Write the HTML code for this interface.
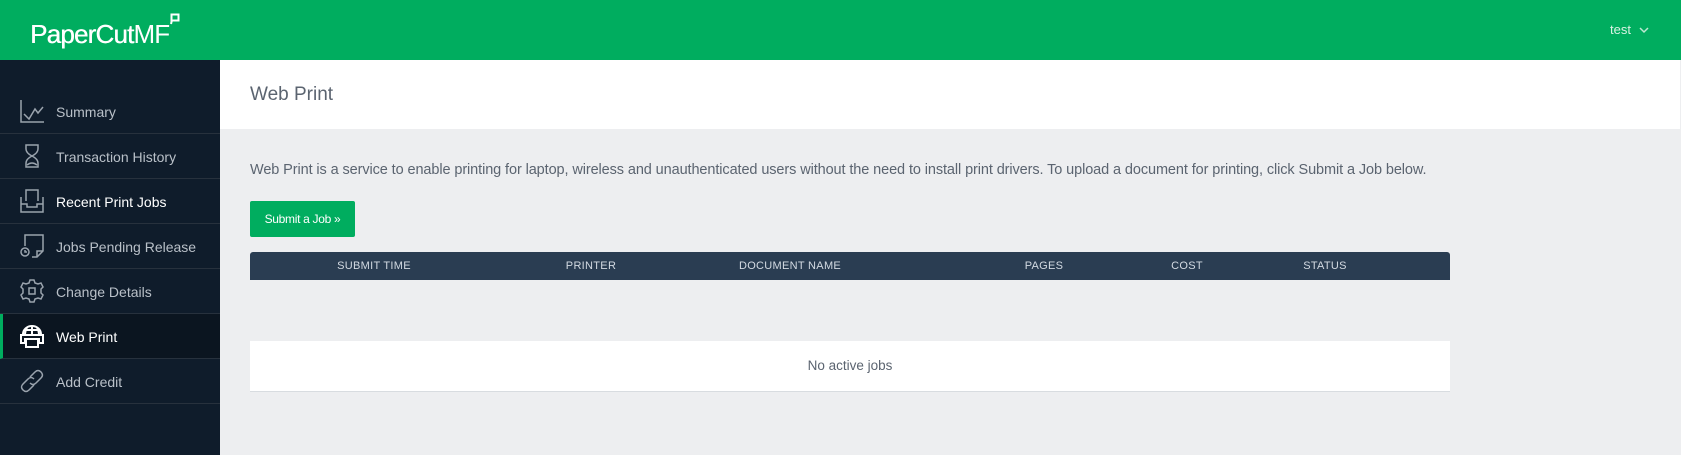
<!DOCTYPE html>
<html><head><meta charset="utf-8"><style>
*{margin:0;padding:0;box-sizing:border-box}
body{width:1681px;height:455px;overflow:hidden;background:#edeef0;font-family:"Liberation Sans",sans-serif;position:relative}
.top{position:absolute;left:0;top:0;width:1681px;height:60px;background:#00ad5f}
.logo{position:absolute;left:30px;top:19px;color:#fff;font-size:26px;letter-spacing:-0.8px}
.logo b{font-weight:normal;text-shadow:0.4px 0 0 #fff}
.user{position:absolute;left:1610px;top:22px;color:#d8f2e4;font-size:13px}
.side{position:absolute;left:0;top:60px;width:220px;height:395px;background:#0f1c2b}
.item{position:absolute;left:0;width:220px;height:45px;border-bottom:1px solid #27313d;color:#b9c0c8;font-size:14px}
.item span{position:absolute;left:56px;top:15px}
.item svg{position:absolute;left:20px;top:10px}
.item.act{background:#0b1520;color:#fff;border-left:3px solid #00ad5f}
.item.act svg{left:17px}.item.act span{left:53px}
.item.w{color:#fff}
.title{position:absolute;left:220px;top:60px;width:1460px;height:69px;background:#fff}
.title span{position:absolute;left:30px;top:24px;font-size:19px;color:#5b6470}
.desc{position:absolute;left:250px;top:162px;font-size:14.5px;color:#5b6470;letter-spacing:-0.1px;white-space:nowrap}
.btn{position:absolute;left:250px;top:201px;width:105px;height:36px;background:#00ad5f;border-radius:2px;color:#fff;font-size:12px;text-align:center;line-height:36px;letter-spacing:-0.3px}
.th{position:absolute;left:250px;top:252px;width:1200px;height:28px;background:#2a3d52;border-radius:3px 3px 0 0}
.th span{position:absolute;top:8px;font-size:11px;color:#d3dae2;transform:translateX(-50%);white-space:nowrap;letter-spacing:0.3px}
.empty{position:absolute;left:250px;top:341px;width:1200px;height:51px;background:#fff;border-bottom:1px solid #d8dce0;text-align:center;line-height:50px;font-size:13.5px;color:#5b6470}
</style></head><body>
<div class="top"><div class="logo"><b>PaperCut</b>MF</div>
<svg style="position:absolute;left:170px;top:13px" width="10" height="12"><rect x="1.5" y="1.5" width="7" height="6" fill="none" stroke="#fff" stroke-width="2"/><path d="M2 7 L1 11" stroke="#fff" stroke-width="2"/></svg>
<div class="user">test <svg width="10" height="8" style="margin-left:4px"><path d="M1 2 L5 6 L9 2" fill="none" stroke="#bfe8d2" stroke-width="1.5"/></svg></div></div>
<div class="side">
<div class="item" style="top:29px"><svg width="24" height="24" fill="none" stroke="#9aa3ad" stroke-width="1.5"><path d="M1 1V23H24"/><path d="M4 15L9 20L15 10L18 14L23 8"/></svg><span>Summary</span></div>
<div class="item" style="top:74px"><svg width="24" height="24" fill="none" stroke="#9aa3ad" stroke-width="1.5"><path d="M6 1H18V5Q18 9 12 12Q6 15 6 19V23H18V19Q18 15 12 12Q6 9 6 5Z"/><path d="M7 21Q12 17 17 21"/></svg><span>Transaction History</span></div>
<div class="item w" style="top:119px"><svg width="24" height="24" fill="none" stroke="#9aa3ad" stroke-width="1.5"><path d="M6 12V1H18V12"/><path d="M1 8V23H23V8"/><path d="M1 15H7V18H17V15H23"/></svg><span>Recent Print Jobs</span></div>
<div class="item" style="top:164px"><svg width="24" height="24" fill="none" stroke="#9aa3ad" stroke-width="1.5"><path d="M5 12V1H23V17L17 23H12"/><path d="M23 17H17V23"/><circle cx="5" cy="18" r="4"/><path d="M5 16V18H7"/></svg><span>Jobs Pending Release</span></div>
<div class="item" style="top:209px"><svg width="24" height="24" fill="none" stroke="#9aa3ad" stroke-width="1.5"><path d="M10 1H14L15 4L18 5L21 4L23 8L21 10V14L23 16L21 20L18 19L15 20L14 23H10L9 20L6 19L3 20L1 16L3 14V10L1 8L3 4L6 5L9 4Z"/><rect x="9" y="9" width="6" height="6"/></svg><span>Change Details</span></div>
<div class="item act" style="top:254px"><svg width="24" height="24" fill="none" stroke="#fff" stroke-width="2"><path d="M3 10A9 8 0 0 1 21 10"/><path d="M12 2V10M7 4Q5 7 5 10M17 4Q19 7 19 10M4 6H20"/><path d="M1 11H23V19H19V15H5V19H1Z"/><rect x="6" y="15" width="12" height="8"/></svg><span>Web Print</span></div>
<div class="item" style="top:299px"><svg width="24" height="24" fill="none" stroke="#9aa3ad" stroke-width="1.5"><path d="M10 8L15 3Q18 0 21 3Q24 6 21 9L16 14Q13 17 10 14"/><path d="M14 16L9 21Q6 24 3 21Q0 18 3 15L8 10Q11 7 14 10"/></svg><span>Add Credit</span></div>
</div>
<div class="title"><span>Web Print</span></div>
<div class="desc">Web Print is a service to enable printing for laptop, wireless and unauthenticated users without the need to install print drivers. To upload a document for printing, click Submit a Job below.</div>
<div class="btn">Submit a Job »</div>
<div class="th"><span style="left:124px">SUBMIT TIME</span><span style="left:341px">PRINTER</span><span style="left:540px">DOCUMENT NAME</span><span style="left:794px">PAGES</span><span style="left:937px">COST</span><span style="left:1075px">STATUS</span></div>
<div class="empty">No active jobs</div>
</body></html>
